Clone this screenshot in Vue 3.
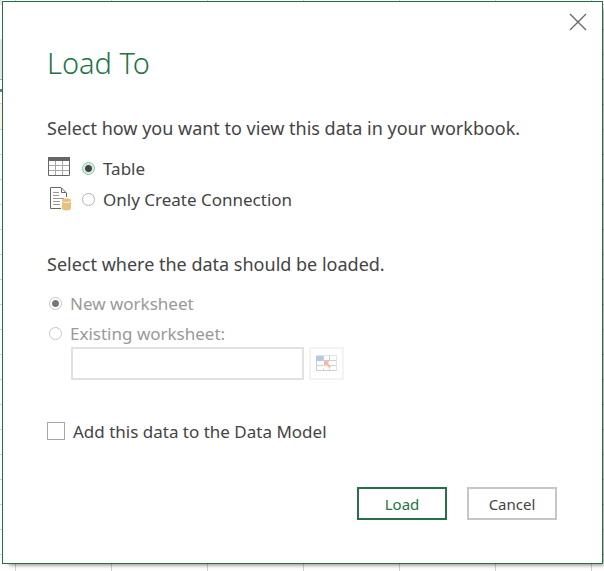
<script setup>
import { ref } from 'vue'

const view = ref('table')
const destination = ref('new')
const range = ref('')
const addToModel = ref(false)
</script>

<template>
  <div class="sheet">
    <span class="sheet-header" aria-hidden="true"></span>
    <main class="dialog" role="dialog" aria-labelledby="dialog-title">
      <button class="close" type="button" aria-label="Close">
        <svg width="18" height="18" viewBox="0 0 18 18" aria-hidden="true">
          <path d="M1 1L17 17M17 1L1 17" fill="none" stroke="#666" stroke-width="1.3" />
        </svg>
      </button>

      <h1 id="dialog-title">Load To</h1>

      <p id="view-label">Select how you want to view this data in your workbook.</p>
      <div class="options view-options" role="radiogroup" aria-labelledby="view-label">
        <label class="option">
          <svg class="icon" width="24" height="24" viewBox="0 0 24 24" aria-hidden="true">
            <path d="M1.5 5V19.5H22.5V5" fill="#fff" stroke="#666" />
            <path d="M2 9.5H22M2 14.5H22M8.500 5V19M15.500 5V19" fill="none" stroke="#a8a8a8" />
            <path d="M1 1H23V5H1Z" fill="#666" />
          </svg>
          <input v-model="view" type="radio" name="view" value="table" />
          <span>Table</span>
        </label>
        <label class="option">
          <svg class="icon" width="24" height="24" viewBox="0 0 24 24" aria-hidden="true">
            <path d="M14 21.500H3.500V0.500H14L19.500 6V10" fill="#fff" stroke="#666" />
            <path d="M14.500 1V5.500H19" fill="none" stroke="#666" />
            <path d="M6 5.500H12M6 8.500H12M6 11.500H17M6 14.500H13M6 17.500H13" fill="none" stroke="#999" />
            <path d="M15 13V21.500C15 24 24 24 24 21.500V13C24 11 15 11 15 13Z" fill="#e8c07c" />
            <path d="M15 14C16 16 23 16 24 14" fill="none" stroke="#fff4df" />
          </svg>
          <input v-model="view" type="radio" name="view" value="connection" />
          <span>Only Create Connection</span>
        </label>
      </div>

      <p id="destination-label">Select where the data should be loaded.</p>
      <div class="options destination-options" role="radiogroup" aria-labelledby="destination-label">
        <label class="option">
          <input v-model="destination" type="radio" name="destination" value="new" disabled />
          <span>New worksheet</span>
        </label>
        <label class="option">
          <input v-model="destination" type="radio" name="destination" value="existing" disabled />
          <span>Existing worksheet:</span>
        </label>
      </div>
      <div class="range">
        <input v-model="range" type="text" aria-label="Existing worksheet location" disabled />
        <button class="picker" type="button" aria-label="Select range" disabled>
          <svg width="21" height="17" viewBox="0 0 21 17" aria-hidden="true">
            <path d="M0.5 0.5H20.500V15.500H0.5Z" fill="#fff" stroke="#e2e2e2" />
            <path d="M0.5 6V15.500H20.500M7 5.500H20M1 10.500H20M7.500 1V15M13.500 1V15" fill="none" stroke="#cfcfcf" />
            <path d="M0 1H7V6H0Z" fill="#b3cbe2" />
            <path d="M7 6H15V13.500H7Z" fill="#fff" />
            <path d="M8 6H13.500L12 8L15 11.500L13.500 13L10 10L8 11.500Z" fill="#f4b9ae" />
          </svg>
        </button>
      </div>

      <label class="model">
        <input v-model="addToModel" type="checkbox" />
        <span>Add this data to the Data Model</span>
      </label>

      <footer class="actions">
        <button class="action primary" type="button">Load</button>
        <button class="action" type="button">Cancel</button>
      </footer>
    </main>
  </div>
</template>

<style>
body {
  margin: 0;
}
</style>

<style scoped>
* {
  box-sizing: border-box;
}

.sheet {
  position: relative;
  display: flex;
  min-height: 100vh;
  padding: 1px 1px 7px 2px;
  background-color: #fff;
  background-image:
    repeating-linear-gradient(to right, #d0d0d0 0 1px, transparent 1px 96px),
    repeating-linear-gradient(to bottom, #d0d0d0 0 1px, transparent 1px 25px);
  background-position: 15px 0, 0 4px;
  background-size: 96px 100%, 100% 25px;
  font-family: "Noto Sans", "Open Sans", sans-serif;
  font-size: 18px;
  color: #444;
}

/* Column headings and the active row, visible beside the dialog's left edge. */
.sheet-header {
  position: absolute;
  top: 0;
  left: 0;
  width: 2px;
  height: 129px;
  background: linear-gradient(
    to bottom,
    #e6e6e6 0 5px,
    #fff 5px 39px,
    #e6e6e6 39px 79px,
    #aaa 79px 80px,
    #fff 80px 89px,
    #777 89px 92px,
    #fff 92px 103px,
    #f8cfa0 103px 104px,
    #fdf1e3 104px 129px
  );
}

.dialog {
  position: relative;
  flex: 1;
  padding: 41px 45px 42px 44px;
  border: 1px solid #217346;
  background: #fff;
  box-shadow: 4px 4px 4px -3px rgb(0 0 0 / 50%);
}

.close {
  position: absolute;
  top: 11px;
  right: 15px;
  display: flex;
  padding: 0;
  border: 0;
  background: none;
}

h1 {
  margin: 0 0 33px;
  font-size: 29px;
  font-weight: 300;
  line-height: 40px;
  color: #217346;
}

p {
  margin: 0;
  line-height: 24px;
}

.options {
  display: flex;
  flex-direction: column;
  align-items: flex-start;
}

.view-options {
  gap: 3px;
  margin: 14px 0 39px;
}

.destination-options {
  gap: 2px;
  margin-top: 13px;
}

.option {
  display: flex;
  align-items: center;
  height: 28px;
  font-size: 17px;
}

.icon {
  margin-right: 11px;
}

.option input {
  appearance: none;
  width: 13px;
  height: 13px;
  margin: 0 8px 0 0;
  border: 1px solid #b5b5b5;
  border-radius: 50%;
  background: #fff;
}

.option input:checked {
  border-color: #8cc5a5;
  background: radial-gradient(circle, #444 0 3px, #d3f0e0 4px);
}

.destination-options .option {
  padding-left: 2px;
  color: #999;
}

.destination-options input:disabled {
  border-color: #c6c6c6;
}

.destination-options input:checked {
  background: radial-gradient(circle, #777 0 3px, #fff 4px);
}

.range {
  display: flex;
  gap: 5px;
  padding-left: 24px;
}

.range input {
  width: 233px;
  height: 33px;
  padding: 0 6px;
  border: 2px solid #e1e1e1;
  background: #fff;
  font: inherit;
}

.picker {
  display: flex;
  align-items: center;
  justify-content: center;
  width: 35px;
  height: 33px;
  padding: 0;
  border: 2px solid #f3f3f3;
  background: #fff;
}

.model {
  display: flex;
  align-items: center;
  gap: 8px;
  width: fit-content;
  height: 24px;
  margin-top: 39px;
  font-size: 17px;
}

.model input {
  appearance: none;
  width: 18px;
  height: 18px;
  margin: 0;
  border: 1px solid #a6a6a6;
  background: #fff;
}

.model input:checked {
  background: #217346;
}

.actions {
  display: flex;
  justify-content: flex-end;
  gap: 20px;
  margin-top: 44px;
}

.action {
  width: 90px;
  height: 33px;
  padding: 0;
  border: 2px solid #c6c6c6;
  background: #fff;
  font-family: inherit;
  font-size: 15px;
  color: #444;
}

.primary {
  border-color: #217346;
  color: #217346;
}
</style>
